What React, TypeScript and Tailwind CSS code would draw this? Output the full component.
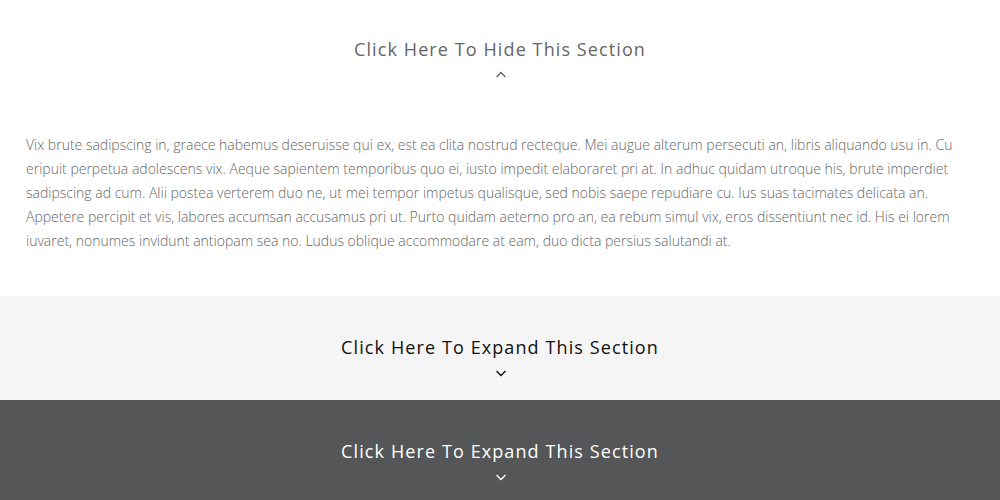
import React from 'react';

const body =
  'Vix brute sadipscing in, graece habemus deseruisse qui ex, est ea clita nostrud recteque. Mei augue alterum persecuti an, libris aliquando usu in. Cu eripuit perpetua adolescens vix. Aeque sapientem temporibus quo ei, iusto impedit elaboraret pri at. In adhuc quidam utroque his, brute imperdiet sadipscing ad cum. Alii postea verterem duo ne, ut mei tempor impetus qualisque, sed nobis saepe repudiare cu. Ius suas tacimates delicata an. Appetere percipit et vis, labores accumsan accusamus pri ut. Purto quidam aeterno pro an, ea rebum simul vix, eros dissentiunt nec id. His ei lorem iuvaret, nonumes invidunt antiopam sea no. Ludus oblique accommodare at eam, duo dicta persius salutandi at.';

function Chevron({ up, color }: { up?: boolean; color: string }) {
  return (
    <svg width="12" height="12" viewBox="0 0 12 12" className="mx-auto mt-[7px] block translate-x-[1px]" aria-hidden>
      <path
        d={up ? 'M1.5 8 L6 3.5 L10.5 8' : 'M1.5 4 L6 8.5 L10.5 4'}
        fill="none"
        stroke={color}
        strokeWidth="1.4"
      />
    </svg>
  );
}

const Toggle: React.FC<{ label: string; up?: boolean; textClass: string; iconColor: string }> = ({
  label,
  up,
  textClass,
  iconColor,
}) => (
  <div className="text-center">
    <h3 className={`text-[18px] leading-[26px] tracking-[1.1px] font-normal ${textClass}`}>{label}</h3>
    <Chevron up={up} color={iconColor} />
  </div>
);

export default function App() {
  return (
    <div className="w-full font-['Open_Sans',sans-serif]">
      <section className="bg-white pt-[36px] pb-[43px]">
        <Toggle label="Click Here To Hide This Section" up textClass="text-[#666]" iconColor="#666" />
        <p className="mt-[52px] px-[26px] text-[14px] leading-[24px] font-light text-[#666]">{body}</p>
      </section>
      <section className="bg-[#f5f5f5] pt-[38px] pb-[21px]">
        <Toggle label="Click Here To Expand This Section" textClass="text-[#111]" iconColor="#111" />
      </section>
      <section className="bg-[#555658] pt-[38px] pb-[21px]">
        <Toggle label="Click Here To Expand This Section" textClass="text-white" iconColor="#fff" />
      </section>
    </div>
  );
}
